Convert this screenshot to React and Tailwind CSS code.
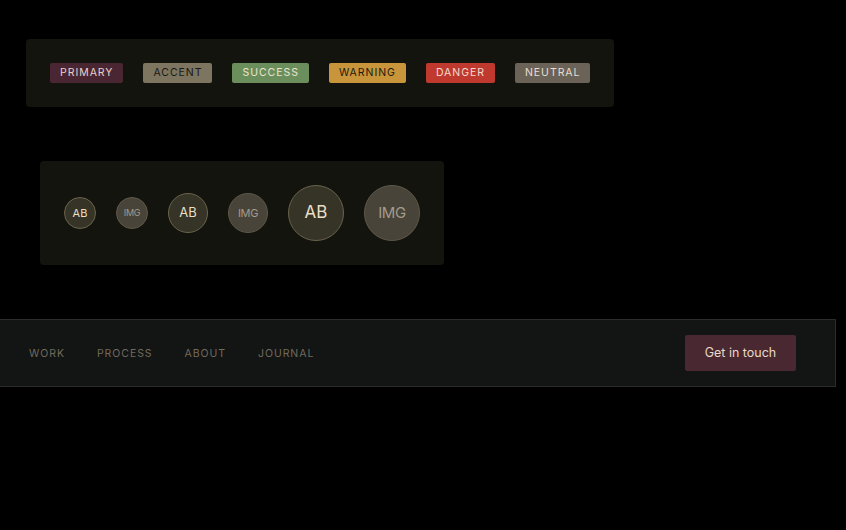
const badges = [
  { label: "PRIMARY", cls: "bg-[#4a2532] text-[#e6d3c8]" },
  { label: "ACCENT", cls: "bg-[#7d7560] text-[#1a1912]" },
  { label: "SUCCESS", cls: "bg-[#6b8f5c] text-[#ece3cc]" },
  { label: "WARNING", cls: "bg-[#c9953a] text-[#1f1a10]" },
  { label: "DANGER", cls: "bg-[#c0392e] text-[#f0dccf]" },
  { label: "NEUTRAL", cls: "bg-[#6b6358] text-[#e8ded0]" },
];

const avatars = [
  { text: "AB", size: "w-8 h-8 text-[11px]", img: false },
  { text: "IMG", size: "w-8 h-8 text-[9px]", img: true },
  { text: "AB", size: "w-10 h-10 text-[13px]", img: false },
  { text: "IMG", size: "w-10 h-10 text-[11px]", img: true },
  { text: "AB", size: "w-14 h-14 text-[17px]", img: false },
  { text: "IMG", size: "w-14 h-14 text-[15px]", img: true },
];

const navLinks = ["WORK", "PROCESS", "ABOUT", "JOURNAL"];

export default function App() {
  return (
    <div className="min-h-screen w-[846px] bg-black font-['Inter',sans-serif] overflow-hidden">
      {/* badges */}
      <div className="pt-[39px] pl-[26px]">
        <div className="inline-flex items-center gap-5 p-6 rounded bg-[#14140f]">
          {badges.map((b) => (
            <span
              key={b.label}
              className={`h-5 px-[10px] pt-px flex items-center rounded-[2px] text-[10.5px] leading-none tracking-[0.092em] ${b.cls}`}
            >
              {b.label}
            </span>
          ))}
        </div>
      </div>

      {/* avatars */}
      <div className="pt-[54px] pl-10">
        <div className="inline-flex items-center gap-5 px-6 py-6 rounded bg-[#14140f]">
          {avatars.map((a, i) => (
            <div
              key={i}
              className={`${a.size} rounded-full flex items-center justify-center border ${
                a.img
                  ? "bg-[#48443a] border-[#5e5848] text-[#a39b8b] tracking-[-0.03em]"
                  : "bg-[#363426] border-[#6a634d] text-[#eadfc6]"
              }`}
            >
              {a.text}
            </div>
          ))}
        </div>
      </div>

      {/* nav bar */}
      <nav className="mt-[54px] w-[836px] h-[68px] flex items-center justify-between pl-[29px] pr-[39px] bg-[#131414] border border-l-0 border-[#2a2b2a]">
        <div className="flex items-center gap-8 pt-px">
          {navLinks.map((l) => (
            <a key={l} href="#" className="text-[10.5px] tracking-[0.09em] text-[#716a5c]">
              {l}
            </a>
          ))}
        </div>
        <button className="w-[111px] h-9 rounded-[2px] bg-[#4a2832] text-[12.5px] text-[#e8d9c8]">
          Get in touch
        </button>
      </nav>
    </div>
  );
}
